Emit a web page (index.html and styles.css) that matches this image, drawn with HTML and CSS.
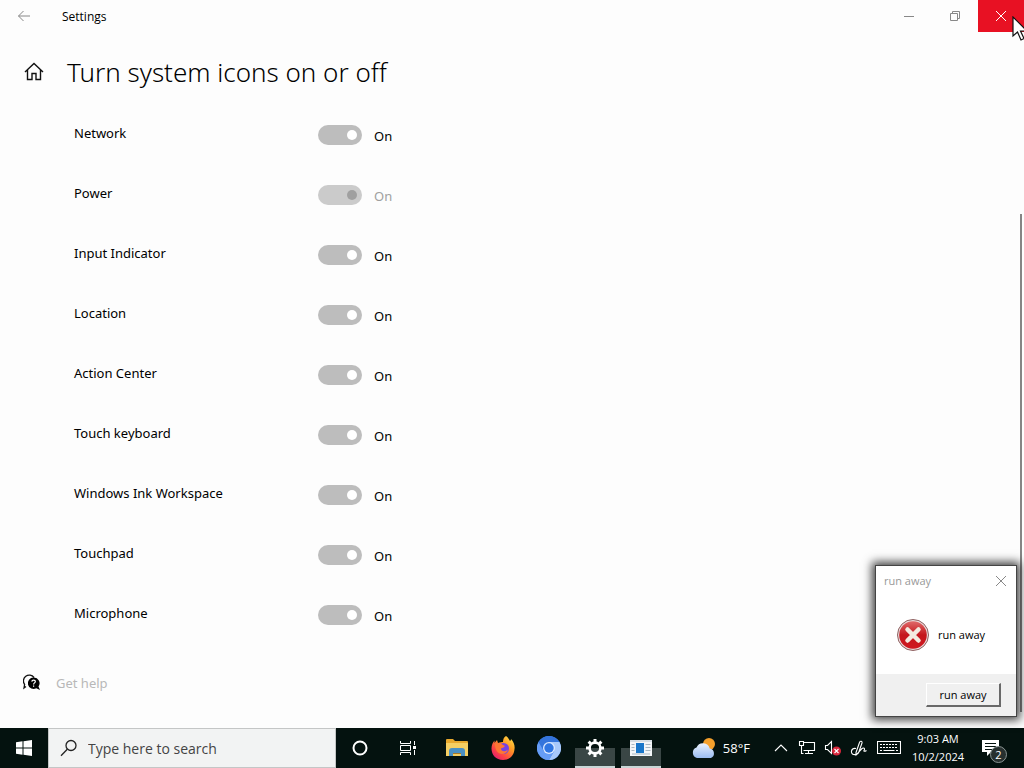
FILE: index.html
```html
<!DOCTYPE html>
<html lang="en">
<head>
    <meta charset="UTF-8">
    <meta name="viewport" content="width=device-width, initial-scale=1.0">
    <title>Settings</title>
    <link rel="stylesheet" href="styles.css">
</head>
<body>
    <div class="window">
        <header class="titlebar">
            <button class="back" aria-label="Back">
                <svg width="14" height="12" viewBox="0 0 14 12"><path d="M13 6H1.5M6.5 1L1.5 6l5 5"/></svg>
            </button>
            <span class="app-name">Settings</span>
            <button class="caption" aria-label="Minimize">
                <svg width="10" height="10" viewBox="0 0 10 10"><path d="M0 5.5h10"/></svg>
            </button>
            <button class="caption" aria-label="Restore">
                <svg width="10" height="10" viewBox="0 0 10 10"><path d="M.5 2.5h7v7h-7zM2.5 2.5v-2h7v7h-2"/></svg>
            </button>
            <button class="caption close" aria-label="Close">
                <svg width="10" height="10" viewBox="0 0 10 10"><path d="M0 0l10 10M10 0L0 10"/></svg>
            </button>
        </header>

        <main>
            <div class="heading">
                <a href="#" class="home" aria-label="Home">
                    <svg width="20" height="20" viewBox="0 0 20 20"><path d="M1 10L10 1.500l9 8.500M3.500 8V17.500h4.500v-6h4v6h4.500V8"/></svg>
                </a>
                <h1>Turn system icons on or off</h1>
            </div>

            <ul class="settings">
                <li><label for="network">Network</label><input type="checkbox" id="network" checked><span>On</span></li>
                <li class="off"><label for="power">Power</label><input type="checkbox" id="power" checked disabled><span>On</span></li>
                <li><label for="input-indicator">Input Indicator</label><input type="checkbox" id="input-indicator" checked><span>On</span></li>
                <li><label for="location">Location</label><input type="checkbox" id="location" checked><span>On</span></li>
                <li><label for="action-center">Action Center</label><input type="checkbox" id="action-center" checked><span>On</span></li>
                <li><label for="touch-keyboard">Touch keyboard</label><input type="checkbox" id="touch-keyboard" checked><span>On</span></li>
                <li><label for="ink">Windows Ink Workspace</label><input type="checkbox" id="ink" checked><span>On</span></li>
                <li><label for="touchpad">Touchpad</label><input type="checkbox" id="touchpad" checked><span>On</span></li>
                <li><label for="microphone">Microphone</label><input type="checkbox" id="microphone" checked><span>On</span></li>
            </ul>

            <a href="#" class="help">
                <svg width="18" height="18" viewBox="0 0 18 18">
                    <path d="M3 12.500L1 14l.6-3.500A5.500 5.500 0 1 1 11 3.500" fill="none" stroke="#111" stroke-width="1.300"/>
                    <path d="M10.500 3.500a5.700 5.700 0 1 0 2.800 10.700L17 16l-1.500-3.500A5.700 5.700 0 0 0 10.500 3.500z" fill="#000"/>
                    <path d="M8.800 7.600c.2-2 3.700-1.900 3.500.1-.1 1.200-1.700 1.300-1.700 2.700M10.600 11.500v1.300" fill="none" stroke="#fff" stroke-width="1.200"/>
                </svg>
                <span>Get help</span>
            </a>
        </main>
        <div class="scroll-thumb"></div>
    </div>

    <footer class="taskbar">
        <button class="start" aria-label="Start">
            <svg width="16" height="16" viewBox="0 0 16 16"><path d="M0 2.200l6.500-.9v6.200H0zM7.500 1.200L16 0v7.500H7.500zM0 8.500h6.500v6.200L0 13.800zM7.500 8.500H16V16l-8.500-1.200z" fill="#fff"/></svg>
        </button>
        <div class="search">
            <svg width="18" height="18" viewBox="0 0 18 18"><circle cx="11" cy="6.500" r="5" fill="none" stroke="#222" stroke-width="1.300"/><path d="M7.300 10.300L1 16.700" stroke="#222" stroke-width="1.300"/></svg>
            <input type="text" aria-label="Search" placeholder="Type here to search">
        </div>
        <button class="task wide" aria-label="Cortana">
            <svg width="16" height="16" viewBox="0 0 16 16"><circle cx="8" cy="8" r="6.500" fill="none" stroke="#fff" stroke-width="2"/></svg>
        </button>
        <button class="task wide" aria-label="Task View">
            <svg width="18" height="16" viewBox="0 0 18 16"><path d="M1.500 1v2.500h10V1M1.500 15v-2.500h10V15M1.500 5.500h10v5h-10zM15.500 1v4M15.500 10v5" fill="none" stroke="#fff"/><path d="M14 6h3v3h-3z" fill="#fff"/></svg>
        </button>
        <div class="pinned">
            <button class="task" aria-label="File Explorer">
                <svg width="22" height="20" viewBox="0 0 22 20">
                    <path d="M0 2q0-1 1-1h6l2 2h12q1 0 1 1v14H0z" fill="#e8a92e"/>
                    <path d="M0 5h22v13H0z" fill="#f5cf63"/>
                    <path d="M3 18v-5q0-3 3-3h10q3 0 3 3v5h-4v-3H7v3z" fill="#4a90c4"/>
                    <path d="M7 15h8v1H7z" fill="#a5792a"/>
                </svg>
            </button>
            <button class="task" aria-label="Firefox">
                <svg width="24" height="24" viewBox="0 0 24 24">
                    <defs>
                        <linearGradient id="fox" x1="1" y1="0" x2="0.200" y2="1"><stop offset="0" stop-color="#fff04f"/><stop offset=".4" stop-color="#ff9a24"/><stop offset=".75" stop-color="#ff4344"/><stop offset="1" stop-color="#e21c72"/></linearGradient>
                    </defs>
                    <path d="M15 0c3 2 3 4 4 5 1-.5 1-2 1-2 3 3 4 7 3.500 10C23 20 18 24 12 24 5 24 .5 19 .5 12.500.5 9 2 6 3.500 4.500V7L6 4l1 3c2-1 4-1 5-1 0-3 1-5 3-6z" fill="url(#fox)"/>
                    <circle cx="12.500" cy="12.500" r="5.500" fill="#7542e5"/>
                    <path d="M4 8c3-2 6-1 8 1l2 1c-1 2-3 1.500-4 2.500 0 3 4 4 7 1-1 5-8 6-11 2C4.500 13 4 11 4 8z" fill="#ff7634"/>
                </svg>
            </button>
            <button class="task" aria-label="Chromium">
                <svg width="24" height="24" viewBox="0 0 24 24">
                    <circle cx="12" cy="12" r="12" fill="#4b8df0"/>
                    <path d="M12 6h10.400A12 12 0 0 1 12 24l5.200-9z" fill="#a9c9fb"/>
                    <path d="M1.600 6A12 12 0 0 0 12 24l5.200-9H7z" fill="#669df6"/>
                    <path d="M1.600 6A12 12 0 0 1 22.400 6H12L6.800 15z" fill="#3474dc"/>
                    <circle cx="12" cy="12" r="6" fill="#dce9ff"/><circle cx="12" cy="12" r="4.700" fill="#2f75e2"/>
                </svg>
            </button>
            <button class="task open" aria-label="Settings">
                <svg width="20" height="20" viewBox="0 0 20 20">
                    <circle cx="10" cy="10" r="5.400" fill="none" stroke="#fff" stroke-width="2.600"/>
                    <path d="M10 1v3M10 16v3M1 10h3M16 10h3M3.600 3.600l2.200 2.200M14.200 14.200l2.200 2.200M3.600 16.400l2.200-2.200M14.200 5.800l2.200-2.200" stroke="#fff" stroke-width="3"/>
                </svg>
            </button>
            <button class="task open" aria-label="run away">
                <svg width="22" height="16" viewBox="0 0 22 16"><path d="M0 0h22v16H0z" fill="#f4f6f8"/><path d="M0 0h22v2H0z" fill="#d5dde3"/><path d="M6 3h8v10H6z" fill="#1976c9"/><path d="M1.500 4.500h3M1.500 7.500h3M1.500 10.500h3M15.500 4.500h5M15.500 7.500h5M15.500 10.500h5M2 14h18" stroke="#a9b7c1"/></svg>
            </button>
        </div>

        <div class="tray">
            <button class="weather">
                <svg width="26" height="22" viewBox="0 0 26 22">
                    <defs><linearGradient id="cloud" x1="0" y1="0" x2="0" y2="1"><stop offset="0" stop-color="#eaf1fd"/><stop offset="1" stop-color="#9bbcf0"/></linearGradient></defs>
                    <circle cx="18" cy="7" r="6" fill="#f5a02c"/>
                    <path d="M6 21a5.500 5.500 0 0 1-.5-10.500 7 7 0 0 1 13.200 1A5 5 0 0 1 20 21z" fill="url(#cloud)"/>
                </svg>
                <span>58°F</span>
            </button>
            <button class="tray-icon" aria-label="Show hidden icons">
                <svg width="14" height="14" viewBox="0 0 14 14"><path d="M1 10l6-6 6 6"/></svg>
            </button>
            <button class="tray-icon" aria-label="Network">
                <svg width="18" height="16" viewBox="0 0 18 16"><path d="M5.500 2.500h11v8h-11M10.500 10.500v3M7 13.500h8M1.500 1.500h4v4h-4zM3.500 5.500v8h2"/></svg>
            </button>
            <button class="tray-icon" aria-label="Volume">
                <svg width="18" height="16" viewBox="0 0 18 16"><path d="M1.500 5.500h2l4-4v12l-4-4h-2z"/><circle cx="12.500" cy="11" r="4.500" class="red"/><path d="M10.500 9l4 4M14.500 9l-4 4"/></svg>
            </button>
            <button class="tray-icon" aria-label="Windows Ink">
                <svg width="18" height="18" viewBox="0 0 18 18"><path d="M6 13.500L9.500 3.500c.5-2 3-1.500 2.500.5L8.500 14 6 16zM6 9.500c-5-1-6 5-2.500 6 4 1 6-3.500 8-5.500s4-.5 2.500 1.500c-.5 1 1 1 2.500 0"/></svg>
            </button>
            <button class="tray-icon keyboard" aria-label="Touch keyboard">
                <svg width="24" height="14" viewBox="0 0 24 14"><path d="M.5 .5h23v12H.5z"/><path d="M3 3.500h18M3 6.500h18" stroke-dasharray="2 1"/><path d="M3 9.500h2M6.500 9.500h11M19 9.500h2"/></svg>
            </button>
            <button class="clock"><span>9:03 AM</span><span>10/2/2024</span></button>
            <button class="notifications" aria-label="Notifications">
                <svg width="18" height="18" viewBox="0 0 18 18"><path d="M0 1h17v12H9l-4 4v-4H0z" fill="#fff"/><path d="M3 4.500h11M3 7.500h11M3 10.500h11" stroke="#04120f"/></svg>
                <span class="count">2</span>
            </button>
        </div>
    </footer>

    <div class="dialog" role="dialog" aria-labelledby="dialog-title">
        <div class="dialog-title">
            <span id="dialog-title">run away</span>
            <button aria-label="Close dialog">
                <svg width="12" height="12" viewBox="0 0 12 12"><path d="M1 1l10 10M11 1L1 11"/></svg>
            </button>
        </div>
        <div class="dialog-body">
            <svg width="32" height="32" viewBox="0 0 32 32">
                <defs><linearGradient id="err" x1="0" y1="0" x2="0" y2="1"><stop offset="0" stop-color="#e06a6a"/><stop offset=".5" stop-color="#c4161c"/><stop offset="1" stop-color="#d01820"/></linearGradient></defs>
                <circle cx="16" cy="16" r="15.500" fill="#eadbdb" stroke="#8f6060"/>
                <circle cx="16" cy="16" r="13.800" fill="url(#err)"/>
                <path d="M10.500 10.500l11 11M21.500 10.500l-11 11" stroke="#f3eadf" stroke-width="4.500" stroke-linecap="round"/>
            </svg>
            <p>run away</p>
        </div>
        <div class="dialog-footer"><button>run away</button></div>
    </div>

    <svg class="cursor" width="18" height="26" viewBox="0 0 18 26"><path d="M1 1v19l4.500-4 3.500 8 3-1.500L8.500 15H15z" fill="#fff" stroke="#111" stroke-width="1.200"/></svg>
</body>
</html>
```
FILE: styles.css
```css
:root {
    --text: #000;
    --muted: #b8b8b8;
    --track: #bdbdbd;
    --bar: #04120f;
}

* {
    box-sizing: border-box;
}

body {
    margin: 0;
    min-height: 100vh;
    display: flex;
    flex-direction: column;
    font-family: "Open Sans", "Noto Sans", sans-serif;
    font-size: 13px;
    color: var(--text);
    background: #fdfdfd;
    overflow: hidden;
}

button {
    border: none;
    padding: 0;
    background: none;
    font: inherit;
    color: inherit;
}

a {
    color: inherit;
    text-decoration: none;
}

svg {
    display: block;
    flex-shrink: 0;
}

.window {
    flex: 1;
    position: relative;
}

/* title bar */
.titlebar {
    display: flex;
    height: 32px;
}

.titlebar svg,
.home svg,
.dialog-title svg {
    fill: none;
    stroke: #888;
}

.back {
    width: 48px;
    display: grid;
    place-items: center;
}

.app-name {
    flex: 1;
    padding-left: 14px;
    font-size: 12px;
    line-height: 33px;
}

.caption {
    width: 46px;
    display: grid;
    place-items: center;
}

.close {
    background: #e81123;
}

.titlebar .close svg {
    stroke: #fff;
}

/* page */
main {
    font-family: "Noto Sans", "Open Sans", sans-serif;
}

.heading {
    display: flex;
    align-items: center;
    gap: 23px;
    padding: 20px 24px 13px;
}

.home svg {
    stroke: #111;
    stroke-width: 1.4;
}

h1 {
    margin: 0;
    font-size: 26px;
    font-weight: 300;
    line-height: 40px;
}

.settings {
    list-style: none;
    margin: 0;
    padding: 0 0 0 74px;
}

.settings li {
    display: flex;
    align-items: center;
    height: 60px;
}

.settings label {
    width: 244px;
    padding-bottom: 4px;
}

.settings input {
    appearance: none;
    display: flex;
    align-items: center;
    justify-content: flex-end;
    width: 44px;
    height: 20px;
    margin: 0 12px 0 0;
    padding: 0 5px;
    border-radius: 10px;
    background: var(--track);
}

.settings input::before {
    content: "";
    width: 10px;
    height: 10px;
    border-radius: 50%;
    background: #fff;
}

.settings input:not(:checked) {
    justify-content: flex-start;
}

.settings span {
    padding-top: 2px;
}

.off input {
    background: #cbcbcb;
}

.off input::before {
    background: #a0a0a0;
}

.off span {
    color: #a0a0a0;
}

.help {
    display: flex;
    align-items: center;
    gap: 15px;
    padding: 28px 0 0 23px;
    line-height: 20px;
    color: var(--muted);
}

.scroll-thumb {
    position: absolute;
    top: 214px;
    right: 2px;
    bottom: 16px;
    width: 2px;
    background: #858585;
}

/* taskbar */
.taskbar {
    display: flex;
    height: 40px;
    color: #fff;
    background: var(--bar);
}

.start {
    width: 48px;
    display: grid;
    place-items: center;
}

.search {
    display: flex;
    align-items: center;
    gap: 10px;
    width: 288px;
    padding-left: 11px;
    border: 1px solid #c4c6c6;
    background: #f2f3f3;
}

.search input {
    flex: 1;
    min-width: 0;
    border: none;
    padding: 0;
    outline: none;
    background: none;
    font: inherit;
    font-size: 14px;
}

.search input::placeholder {
    color: #444;
}

.task {
    width: 46px;
    display: grid;
    place-items: center;
}

.wide {
    width: 48px;
}

.pinned {
    display: flex;
    padding-left: 2px;
}

.open {
    width: 40px;
    margin: 0 3px;
    border-bottom: 2px solid #c9d6d6;
    padding-top: 2px;
    background: linear-gradient(transparent 20px, #3a4645 20px);
}

.tray {
    display: flex;
    align-items: center;
    margin-left: auto;
}

.weather {
    display: flex;
    align-items: center;
    gap: 6px;
    margin-right: 18px;
}

.tray-icon {
    width: 26px;
    display: grid;
    place-items: center;
}

.tray-icon svg {
    fill: none;
    stroke: #fff;
    stroke-width: 1.1;
}

.tray-icon .red {
    fill: #d9263b;
    stroke: none;
}

.keyboard {
    width: 34px;
}

.clock {
    display: flex;
    flex-direction: column;
    align-items: center;
    width: 64px;
    font-size: 11px;
    line-height: 18px;
}

.notifications {
    position: relative;
    padding: 0 24px 0 12px;
}

.count {
    position: absolute;
    left: 20px;
    top: 7px;
    width: 17px;
    height: 17px;
    border: 1px solid #8a9493;
    border-radius: 50%;
    font-size: 11px;
    line-height: 15px;
    text-align: center;
    background: #27302f;
}

/* message box */
.dialog {
    position: absolute;
    right: 7px;
    bottom: 51px;
    width: 142px;
    border: 1px solid #444;
    font-size: 11px;
    background: #fff;
    box-shadow: 0 0 9px 3px rgba(0, 0, 0, 0.75);
}

.dialog-title {
    display: flex;
    align-items: center;
    justify-content: space-between;
    height: 29px;
    padding: 0 9px 0 8px;
    color: #999;
}

.dialog-body {
    display: flex;
    align-items: center;
    gap: 9px;
    height: 79px;
    padding-left: 21px;
}

.dialog-body p {
    margin: 0;
}

.dialog-footer {
    display: flex;
    justify-content: flex-end;
    height: 42px;
    padding: 9px 15px;
    background: #f0f0f0;
}

.dialog-footer button {
    width: 75px;
    height: 24px;
    border: 1px solid #fff;
    border-right: 2px solid #696969;
    border-bottom: 2px solid #696969;
}

.cursor {
    position: absolute;
    top: 16px;
    left: calc(100% - 12px);
}
```
